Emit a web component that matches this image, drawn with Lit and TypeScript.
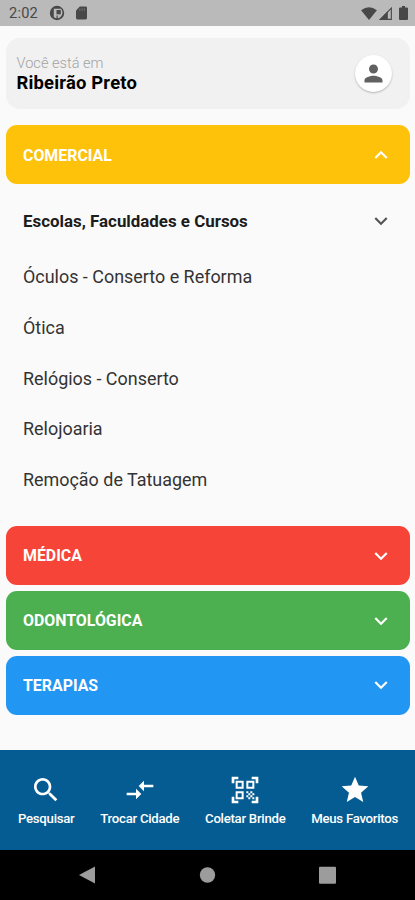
import { LitElement, html, css, svg } from "lit";
import { customElement } from "lit/decorators.js";
import { classMap } from "lit/directives/class-map.js";

const PERSON = "M12 12c2.21 0 4-1.79 4-4s-1.79-4-4-4-4 1.79-4 4 1.79 4 4 4zm0 2c-2.67 0-8 1.34-8 4v2h16v-2c0-2.66-5.33-4-8-4z";
const DOWN = "M16.59 8.59L12 13.17 7.41 8.59 6 10l6 6 6-6z";
const UP = "M12 8l-6 6 1.41 1.41L12 10.83l4.59 4.58L18 14z";
const SEARCH = "M15.5 14h-.79l-.28-.27C15.41 12.59 16 11.11 16 9.5 16 5.91 13.09 3 9.5 3S3 5.91 3 9.5 5.91 16 9.5 16c1.61 0 3.09-.59 4.23-1.57l.27.28v.79l5 4.99L20.49 19l-4.99-5zm-6 0C7.01 14 5 11.99 5 9.5S7.01 5 9.5 5 14 7.01 14 9.5 11.99 14 9.5 14z";
const COMPARE = "M9.01 14H2v2h7.01v3L13 15l-3.99-4v3zm5.98-1v-3H22V8h-7.01V5L11 9l3.99 4z";
const STAR = "M12 17.27L18.18 21l-1.64-7.03L22 9.24l-7.19-.61L12 2 9.19 8.63 2 9.24l5.46 4.73L5.82 21z";
const QR = "M9.5 6.5v3h-3v-3h3M11 5H5v6h6V5zM9.5 14.5v3h-3v-3h3M11 13H5v6h6v-6zM17.5 6.5v3h-3v-3h3M19 5h-6v6h6V5zM13 13h1.5v1.5H13zM14.5 14.5H16V16h-1.5zM16 13h1.5v1.5H16zM13 16h1.5v1.5H13zM14.5 17.5H16V19h-1.5zM16 16h1.5v1.5H16zM17.5 14.5H19V16h-1.5zM17.5 17.5H19V19h-1.5zM22 7h-2V4h-3V2h5v5zM22 22v-5h-2v3h-3v2h5zM2 22h5v-2H4v-3H2v5zM2 2v5h2V4h3V2H2z";

const icon = (d: string, cls: string) =>
  html`<svg class=${cls} viewBox="0 0 24 24" fill="currentColor">${svg`<path fill-rule="evenodd" d=${d}></path>`}</svg>`;

const ITEMS = ["Óculos - Conserto e Reforma", "Ótica", "Relógios - Conserto", "Relojoaria", "Remoção de Tatuagem"];
const NAV = [
  { label: "Pesquisar", icon: SEARCH },
  { label: "Trocar Cidade", icon: COMPARE },
  { label: "Coletar Brinde", icon: QR },
  { label: "Meus Favoritos", icon: STAR },
];

@customElement("app-root")
export class AppRoot extends LitElement {
  static styles = css`
    :host { display: flex; flex-direction: column; width: 415px; height: 900px; overflow: hidden;
      background: #fafafa; font-family: Roboto, "Liberation Sans", sans-serif; color: #1c1c1c; }
    * { box-sizing: border-box; }
    svg { display: block; flex: none; }
    .status { height: 25.5px; flex: none; background: #bababa; color: #484848; display: flex;
      align-items: center; padding: 1px 8px 0 9px; }
    .time { font-size: 14.6px; letter-spacing: 0.2px; width: 40px; }
    .disc { width: 16px; height: 16px; }
    .sd { width: 11px; height: 14px; margin-left: 10.5px; }
    .signals { margin-left: auto; display: flex; align-items: center; }
    .wifi { width: 16px; height: 13px; }
    .cell { width: 13px; height: 13px; margin-left: 2px; }
    .batt { width: 9px; height: 14px; margin-left: 7px; margin-right: -1px; }
    main { flex: 1; padding: 12.5px 5.5px 0 6px; }
    .place { height: 71px; border-radius: 14px; background: #f1f1f1; display: flex;
      align-items: center; justify-content: space-between; padding: 0 18px 1px 10.5px; }
    .hint { font-size: 14.6px; line-height: 19px; font-weight: 300; color: #a3a3a3; }
    .city { font-size: 18.4px; line-height: 20px; font-weight: 700; letter-spacing: 0.2px; color: #000; }
    .avatar { width: 37px; height: 37px; border-radius: 50%; background: #fff; color: #616161;
      display: grid; place-items: center; box-shadow: 0 1px 2px rgba(0, 0, 0, 0.25); }
    .person { width: 27px; height: 27px; }
    .row { display: flex; align-items: center; justify-content: space-between; padding: 0 16px 0 17px; }
    .band { height: 59px; border-radius: 11px; color: #fff; font-size: 15.9px; font-weight: 700; margin-bottom: 5.6px; }
    .comercial { background: #ffc20a; margin: 16px 0 0; padding-top: 1px; }
    .medica { background: #f74438; }
    .odonto { background: #4caf50; }
    .terapias { background: #2296f3; }
    .chev { width: 26px; height: 26px; }
    .sub { height: 66px; padding-top: 7px; font-size: 16.9px; font-weight: 700; }
    .sub .chev { color: #555; }
    .list { list-style: none; margin: 2px 0 20.5px; padding: 0 17px; }
    .item { height: 50.8px; line-height: 50.8px; font-size: 17.93px; color: #333; white-space: nowrap; }
    nav { height: 100.5px; flex: none; background: #045c92; color: #fff; display: flex;
      justify-content: space-between; padding: 24px 17px 0 18px; }
    .tab { display: flex; flex-direction: column; align-items: center; font-size: 13.2px; line-height: 18px;
      letter-spacing: -0.27px; gap: 4px; white-space: nowrap; font-weight: 500; }
    .tabicon { width: 32px; height: 32px; }
    .system { height: 50px; flex: none; background: #000; color: #9c9c9c; display: flex;
      align-items: center; padding: 0 79px; justify-content: space-between; }
    .key { width: 17px; height: 18px; }
  `;

  private band(label: string, tone: string, open = false) {
    return html`<div class=${classMap({ row: true, band: true, [tone]: true })}>
      <span class="label">${label}</span>${icon(open ? UP : DOWN, "chev")}
    </div>`;
  }

  render() {
    return html`
      <div class="status">
        <span class="time">2:02</span>
        <svg class="disc" viewBox="0 0 16 16"><circle cx="8" cy="8" r="7.2" fill="currentColor"></circle><path d="M4.800 3.800H12q1.500 1.800 1.500 4.200-.8 4.500-4.800 5.300V10.500H7.500v2.800Q5.500 13 4.800 12z" fill="#bababa"></path><path d="M7.500 5h4.300v4.300H7.500z" fill="currentColor"></path></svg>
        <svg class="sd" viewBox="0 0 12 14"><path d="M4.2 0H10.5Q12 0 12 1.5V12.5Q12 14 10.5 14H1.500Q0 14 0 12.500V4.200z" fill="currentColor"></path><path d="M4.200 2v2.500M6.700 2v2.500M9.200 2v2.500" stroke="#777" stroke-width="1"></path></svg>
        <div class="signals">
          <svg class="wifi" viewBox="0 0 17 14"><path d="M0 3.600Q8.500-3 17 3.600L8.500 14z" fill="currentColor"></path></svg>
          <svg class="cell" viewBox="0 0 14 14"><path d="M13.300 1.200V13.300H1.500z" fill="none" stroke="currentColor" stroke-width="1.200"></path><path d="M9.500 4.500V14H0z" fill="currentColor"></path></svg>
          <svg class="batt" viewBox="0 0 9 14"><path d="M3 0h3v1.500h2q1 0 1 1V13q0 1-1 1H1q-1 0-1-1V2.500q0-1 1-1h2z" fill="currentColor"></path></svg>
        </div>
      </div>
      <main>
        <div class="place">
          <div><div class="hint">Você está em</div><div class="city">Ribeirão Preto</div></div>
          <div class="avatar">${icon(PERSON, "person")}</div>
        </div>
        ${this.band("COMERCIAL", "comercial", true)}
        <div class="row sub"><span>Escolas, Faculdades e Cursos</span>${icon(DOWN, "chev")}</div>
        <ul class="list">${ITEMS.map((t) => html`<li class="item">${t}</li>`)}</ul>
        ${this.band("MÉDICA", "medica")}
        ${this.band("ODONTOLÓGICA", "odonto")}
        ${this.band("TERAPIAS", "terapias")}
      </main>
      <nav>${NAV.map((n) => html`<div class="tab">${icon(n.icon, "tabicon")}<span>${n.label}</span></div>`)}</nav>
      <div class="system">
        <svg class="key" viewBox="0 0 17 18"><path d="M16 .5v17L0 9z" fill="currentColor"></path></svg>
        <svg class="key" viewBox="0 0 17 18"><circle cx="8.500" cy="9" r="7.700" fill="currentColor"></circle></svg>
        <svg class="key" viewBox="0 0 17 18"><rect x="0" y=".7" width="17" height="17" rx="1" fill="currentColor"></rect></svg>
      </div>
    `;
  }
}
